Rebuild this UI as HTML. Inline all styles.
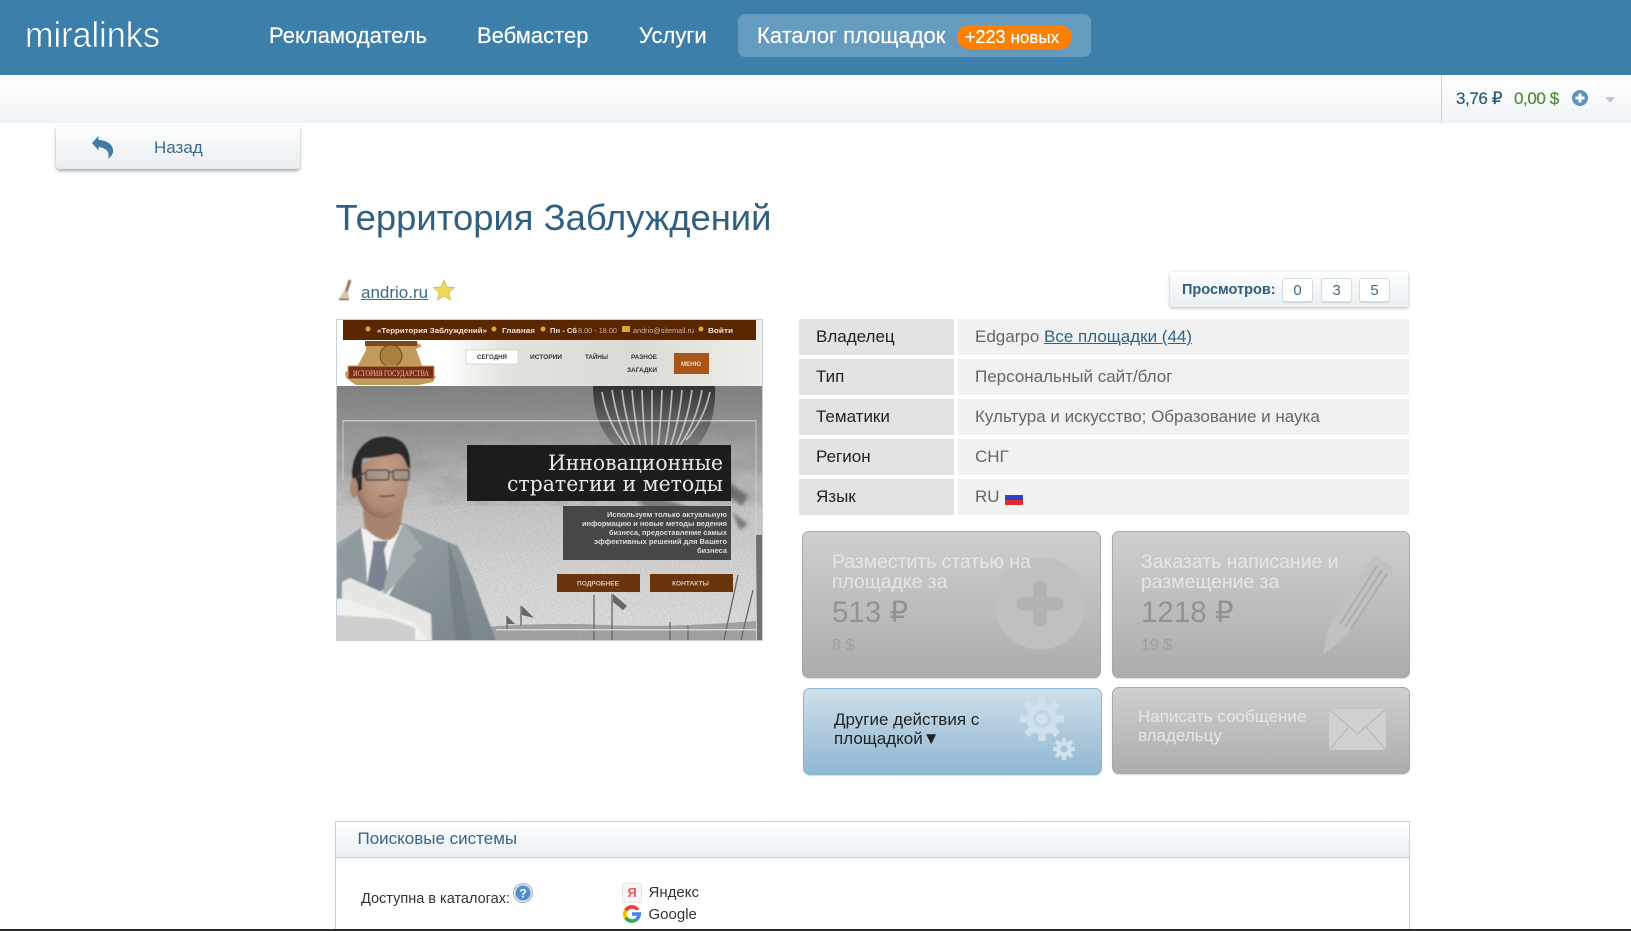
<!DOCTYPE html>
<html lang="ru"><head><meta charset="utf-8"><title>Территория Заблуждений</title>
<style>
html{margin:0;padding:0;background:#fff;width:1631px;height:931px;overflow:hidden}
body{margin:0;padding:0;background:#fff;width:1631px;height:931px;position:relative;overflow:hidden;font-family:"Liberation Sans","DejaVu Sans",sans-serif}
.a{position:absolute;white-space:nowrap}
.box{position:absolute;box-sizing:border-box}
.nav{color:#fff;font-size:22px;top:22px;line-height:28px;-webkit-text-stroke:.2px #fff}
.lab,.val{position:absolute;height:36px;line-height:36px;font-size:17px}
.lab{left:799px;width:155px;background:#e3e3e3;color:#222;padding-left:17px;box-sizing:border-box}
.val{left:958px;width:451px;background:#f1f1f1;color:#666;padding-left:17px;box-sizing:border-box}
.val a{color:#2f6488;text-decoration:underline}
.btn{position:absolute;box-sizing:border-box;border-radius:7px;border:1px solid #a9a9a9;background:linear-gradient(#cfcfcf,#acacac);box-shadow:0 1px 1px rgba(0,0,0,.15)}
.cnt{position:absolute;top:278px;height:24px;width:31px;box-sizing:border-box;border:1px solid #d6dbdf;border-radius:3px;background:#fff;color:#3d6a8a;text-align:center;font-size:15px;line-height:23px;box-shadow:0 1px 1px rgba(0,0,0,.12)}
</style></head><body>

<div class="box" style="left:0;top:0;width:1631px;height:75px;background:#3d7fab"></div>
<div class="a" style="left:25px;top:12px;font-size:36px;line-height:46px;color:#fff;-webkit-text-stroke:.6px #3d7fab;transform:scaleX(.95);transform-origin:0 0">miralinks</div>
<div class="a nav" style="left:269px">Рекламодатель</div>
<div class="a nav" style="left:477px">Вебмастер</div>
<div class="a nav" style="left:639px">Услуги</div>
<div class="box" style="left:738px;top:14px;width:353px;height:43px;background:#649bbe;border-radius:7px"></div>
<div class="a nav" style="left:757px">Каталог площадок</div>
<div class="box" style="left:957px;top:25px;width:115px;height:24px;background:#ff7f00;border-radius:12px"></div>
<div class="a" style="left:965px;top:23px;line-height:28px;font-size:18px;color:#fff;-webkit-text-stroke:.3px #fff">+223 <span style="font-size:17px">новых</span></div>

<div class="box" style="left:0;top:75px;width:1631px;height:48px;background:linear-gradient(#fff,#f0f3f6)"></div>
<div class="box" style="left:1441px;top:75px;width:1px;height:48px;background:#c9d2d8"></div>
<div class="a" style="left:1456px;top:88px;font-size:17px;line-height:22px;color:#2b5a7b;letter-spacing:-.4px;-webkit-text-stroke:.2px #2b5a7b">3,76 ₽</div>
<div class="a" style="left:1514px;top:88px;font-size:17px;line-height:22px;color:#4c8a35;letter-spacing:-.4px;-webkit-text-stroke:.2px #4c8a35">0,00 $</div>
<svg class="a" style="left:1572px;top:89px" width="16" height="18" viewBox="0 0 16 18"><circle cx="8" cy="9" r="8" fill="#5e93bc"/><path d="M8 4.500v9M3.500 9h9" stroke="#fff" stroke-width="3"/></svg>
<svg class="a" style="left:1604px;top:96px" width="12" height="8"><path d="M1 1h10L6 7z" fill="#c4c9cd"/></svg>

<div class="box" style="left:56px;top:126px;width:244px;height:43px;border-radius:0 0 4px 4px;background:linear-gradient(#fdfefe,#e9eef1);box-shadow:0 2px 3px rgba(0,0,0,.35)"></div>
<svg class="a" style="left:90px;top:134px;filter:blur(.3px)" width="26" height="27" viewBox="0 0 26 27"><path d="M2 9 8.500 2V6C17 6 24 11 23 18C22.500 21 20.500 23 18 25C20 20 18 14 8.500 13V16.500Z" fill="#427ba5"/></svg>
<div class="a" style="left:154px;top:137px;font-size:17px;line-height:22px;color:#3b6a8c">Назад</div>

<div class="a" style="left:335.500px;top:195px;font-size:36.400px;line-height:46px;color:#30607f">Территория Заблуждений</div>

<svg class="a" style="left:336px;top:278px;filter:blur(.4px)" width="20" height="24" viewBox="0 0 20 24"><path d="M14 2 10 14" stroke="#97785a" stroke-width="3" fill="none"/><path d="M8 13l4 1 1 7H3z" fill="#d8c6a8"/><path d="M3 21h10v1H3z" fill="#4b3a28"/></svg>
<div class="a" style="left:361px;top:282px;font-size:17px;line-height:22px;color:#3a6a8d;text-decoration:underline">andrio.ru</div>
<svg class="a" style="left:433px;top:279px" width="22" height="22" viewBox="0 0 22 22"><path d="M11 1l3 7 7.500.6-5.700 4.900 1.800 7.500L11 17l-6.600 4 1.800-7.500L.5 8.600 8 8z" fill="#eed95c" stroke="#cdb544" stroke-width=".7"/></svg>

<div class="box" style="left:1170px;top:272px;width:238px;height:35px;background:linear-gradient(#fdfefe,#eaeff2);border-radius:2px;box-shadow:0 1px 3px rgba(0,0,0,.3)"></div>
<div class="a" style="left:1182px;top:279px;font-size:14.500px;font-weight:bold;line-height:22px;color:#2f5c7c">Просмотров:</div>
<div class="cnt" style="left:1282px">0</div><div class="cnt" style="left:1321px">3</div><div class="cnt" style="left:1359px">5</div>

<svg class="a" style="left:336px;top:320px" width="427" height="321" viewBox="0 0 427 321">
<defs>
<linearGradient id="bg" x1="0" y1="0" x2="0" y2="1"><stop offset="0" stop-color="#808080"/><stop offset=".2" stop-color="#9c9c9c"/><stop offset=".42" stop-color="#c4c4c4"/><stop offset=".75" stop-color="#d8d8d8"/><stop offset="1" stop-color="#e0e0e0"/></linearGradient>
<linearGradient id="top" x1="0" y1="0" x2="1" y2="0"><stop offset="0" stop-color="#fff"/><stop offset=".25" stop-color="#fff"/><stop offset=".4" stop-color="#e4e2dc"/><stop offset=".7" stop-color="#dcdad4"/><stop offset="1" stop-color="#efeeea"/></linearGradient>
<linearGradient id="suit" x1="0" y1="0" x2="1" y2="1"><stop offset="0" stop-color="#9ca5a8"/><stop offset="1" stop-color="#78848a"/></linearGradient>
<linearGradient id="loon" x1="0" y1="0" x2="0" y2="1"><stop offset="0" stop-color="#333"/><stop offset=".45" stop-color="#5f5f5f"/><stop offset="1" stop-color="#8f8f8f"/></linearGradient>
<radialGradient id="face" cx=".55" cy=".4" r=".7"><stop offset="0" stop-color="#c9a48c"/><stop offset=".7" stop-color="#ad8771"/><stop offset="1" stop-color="#7d5a4a"/></radialGradient>
<filter id="cl" x="0" y="0" width="100%" height="100%"><feTurbulence type="fractalNoise" baseFrequency=".03 .05" numOctaves="4" seed="7"/><feColorMatrix values="0 0 0 0 .25 0 0 0 0 .25 0 0 0 0 .25 1.600 0 0 0 -.5"/></filter>
<filter id="st" x="0" y="0" width="100%" height="100%"><feTurbulence type="fractalNoise" baseFrequency=".5 .9" numOctaves="2" seed="3"/><feColorMatrix values="0 0 0 0 .15 0 0 0 0 .15 0 0 0 0 .15 1.600 0 0 0 -.55"/></filter>
<filter id="b1"><feGaussianBlur stdDeviation=".7"/></filter>
<filter id="b2"><feGaussianBlur stdDeviation=".35"/></filter>
<filter id="b3"><feGaussianBlur stdDeviation="1.500"/></filter>
</defs>
<rect width="427" height="321" fill="#fff"/>
<rect y="0" width="427" height="66" fill="url(#top)"/>
<rect y="66" width="427" height="255" fill="url(#bg)"/>
<rect y="66" width="427" height="120" filter="url(#cl)" opacity=".5"/>
<rect y="66" width="427" height="255" filter="url(#st)" opacity=".25"/>
<path d="M257 66h122q2 40-20 62l-22 14h-38q-28-16-38-46-4-14-4-30z" fill="url(#loon)"/>
<g stroke="#cfcfcf" stroke-width="1.700" fill="none" opacity=".85" filter="url(#b2)"><path d="M266 72q6 34 26 56M276 70q6 38 22 64M286 70q4 36 18 68M296 70q3 38 12 70M306 70q1 38 6 70M316 70v70M326 70q-1 38-6 70M336 70q-2 38-10 70M346 70q-3 36-16 68M356 70q-5 36-20 64M366 70q-6 34-24 58M374 72q-6 28-24 48"/></g>
<path d="M300 181q30-6 55 8l25 18-10 6-26-14-30-8z" fill="#3a3a3a" opacity=".5" filter="url(#b3)"/>
<path d="M392 162l20 14-6 10-14-10zM396 192l16 12-8 6z" fill="#3a3a3a" opacity=".55" filter="url(#b3)"/>
<rect x="7" y="100" width="413" height="1.500" fill="#dcdcdc" opacity=".7"/>
<path d="M7 100v60M420 100v120" stroke="#dcdcdc" stroke-width="1.200" opacity=".6"/>

<g filter="url(#b2)">
<rect x="7" y="0" width="413" height="20" fill="#5a2605"/>
<g font-family="Liberation Sans,sans-serif" font-size="7" font-weight="bold" fill="#f1e6d8" lengthAdjust="spacingAndGlyphs">
<text x="41" y="13" textLength="110" lengthAdjust="spacingAndGlyphs">«Территория Заблуждений»</text><text x="166" y="13" textLength="33" lengthAdjust="spacingAndGlyphs">Главная</text><text x="214" y="13" textLength="27" lengthAdjust="spacingAndGlyphs">Пн - Сб</text><text x="242" y="13" font-weight="normal" fill="#c9b7a4" textLength="39" lengthAdjust="spacingAndGlyphs">8.00 - 18.00</text><text x="297" y="13" font-weight="normal" fill="#c9b7a4" textLength="61" lengthAdjust="spacingAndGlyphs">andrio@sitemail.ru</text><text x="372" y="13" textLength="25" lengthAdjust="spacingAndGlyphs">Войти</text></g>
<g fill="#d9a92e"><circle cx="32" cy="9" r="2.500"/><circle cx="158" cy="9" r="2.500"/><circle cx="207" cy="9" r="2.500"/><rect x="286" y="6" width="8" height="6"/><circle cx="365" cy="9" r="2.500"/></g>

<path d="M30 22h50l6 4-6 3 8 22 12 5-3 6-14 3H20l-10-7-1-6 11-3 10-19z" fill="#c39a5b"/>
<path d="M29 21h52v5H29z" fill="#7c4a1c"/><circle cx="55" cy="36" r="11" fill="#a97f3e" stroke="#6e4a1f"/>
<rect x="12" y="46" width="86" height="13" fill="#7a2e17" stroke="#d0a85f"/>
<text x="17" y="56" font-family="Liberation Serif,serif" font-size="8" fill="#e8c99b" textLength="76" lengthAdjust="spacingAndGlyphs">ИСТОРИЯ ГОСУДАРСТВА</text>

<rect x="130" y="30" width="52" height="14" fill="#fff" stroke="#cfcfcf" stroke-width=".8"/>
<g font-family="Liberation Sans,sans-serif" font-size="6.500" font-weight="bold" fill="#333"><text x="141" y="39" textLength="30" lengthAdjust="spacingAndGlyphs">СЕГОДНЯ</text><text x="194" y="39" textLength="32" lengthAdjust="spacingAndGlyphs">ИСТОРИИ</text><text x="249" y="39" textLength="23" lengthAdjust="spacingAndGlyphs">ТАЙНЫ</text><text x="295" y="39" textLength="26" lengthAdjust="spacingAndGlyphs">РАЗНОЕ</text><text x="291" y="52" textLength="30" lengthAdjust="spacingAndGlyphs">ЗАГАДКИ</text></g>
<rect x="338" y="33" width="35" height="21" fill="#a8551a"/><text x="345" y="46" font-family="Liberation Sans,sans-serif" font-size="6.500" font-weight="bold" fill="#f0dcc8" textLength="20" lengthAdjust="spacingAndGlyphs">МЕНЮ</text>

<rect x="131" y="125" width="264" height="56" fill="#1c1c1c"/>
<g font-family="DejaVu Serif,serif" font-size="21" fill="#e8e8e8"><text x="212" y="150" textLength="175" lengthAdjust="spacingAndGlyphs">Инновационные</text><text x="171" y="171" textLength="216" lengthAdjust="spacingAndGlyphs">стратегии и методы</text></g>
<rect x="227" y="186" width="168" height="54" fill="#464646"/>
<g font-family="Liberation Sans,sans-serif" font-size="7" font-weight="bold" fill="#dcdcdc"><text x="271" y="197" textLength="120" lengthAdjust="spacingAndGlyphs">Используем только актуальную</text><text x="246" y="206" textLength="145" lengthAdjust="spacingAndGlyphs">информацию и новые методы ведения</text><text x="273" y="215" textLength="118" lengthAdjust="spacingAndGlyphs">бизнеса, предоставление самых</text><text x="258" y="224" textLength="133" lengthAdjust="spacingAndGlyphs">эффективных решений для Вашего</text><text x="361" y="233" textLength="30" lengthAdjust="spacingAndGlyphs">бизнеса</text></g>
<rect x="221" y="254" width="83" height="18" fill="#6b3410"/><rect x="314" y="254" width="83" height="18" fill="#6b3410"/>
<g font-family="Liberation Sans,sans-serif" font-size="6.500" font-weight="bold" fill="#dcc6b2"><text x="241" y="265.500" textLength="42" lengthAdjust="spacingAndGlyphs">ПОДРОБНЕЕ</text><text x="336" y="265.500" textLength="37" lengthAdjust="spacingAndGlyphs">КОНТАКТЫ</text></g>

<g stroke="#666" fill="none" stroke-width="1.300"><path d="M258 320v-45M276 320v-46M185 306v-20M171 310v-14M334 320v-18M352 320v-14M388 320l14-65M405 320l12-50"/></g>
<path d="M277 274l14 12-4 4-10-8zM186 286l12 12-12-3zM171 296l8 8-8 0z" fill="#666"/>
<path d="M150 307q60-5 120-2t150-4v20H160z" fill="#6a6a6a" opacity=".5"/>
<rect x="160" y="309" width="265" height="1.500" fill="#e4e4e4" opacity=".8"/>
<path d="M420 215l1 105h6V215z" fill="#4a4a4a" opacity=".7"/>
</g>

<g filter="url(#b1)">
<path d="M0 224l25-16 42-5 55 23 14 30 24 65H0z" fill="url(#suit)"/>
<path d="M112 222q12 30 14 50l10 49h-16l-6-50z" fill="#6c787d" opacity=".6"/>
<path d="M25 208 30 240 31 262 50 280 66 252 68 204 46 214z" fill="#f1f1f1"/>
<path d="M37 221h15l-4 9 5 33-11 12-11-10 6-36z" fill="#7b8494"/>
<path d="M67 203l20 25-10 6 3 6-35 40 11-50z" fill="#a3acaf"/>
<path d="M25 207l-24 25 7 24 17 9 1-30z" fill="#8e999d"/>
<path d="M27 178q0 20 2 30 14 14 24 12 10-4 12-18l4-30z" fill="#a88470"/>
<path d="M22 146l-1 28q3 12 10 18 12 10 24 4 12-10 16-22l2-28q-4-16-14-18z" fill="url(#face)"/>
<path d="M17 172l-1-20q2-24 20-33 18-6 30 3 9 8 8 28l-3-4q-4-14-12-12-18 4-32 4-2 4-1 14 0 12 0 18z" fill="#2c2a29"/>
<ellipse cx="18" cy="168" rx="4" ry="10" fill="#ad8771"/>
<g fill="#98918c" fill-opacity=".55" stroke="#4a4a4a" stroke-width="1.500"><rect x="30" y="150" width="23" height="10" rx="2"/><rect x="57" y="150" width="16" height="10" rx="2"/></g>
<path d="M53 152h4M30 152l-9 6" stroke="#4a4a4a" stroke-width="1.500"/>
<path d="M43 176q8 1 16-1" stroke="#7c4f40" stroke-width="1.800" fill="none"/>
<path d="M0 279l14-1 80 30 2 13H0z" fill="#f0f0ed"/>
<path d="M6 262l8-4 81 36 1 27-5-2-13-17L6 278z" fill="#e6e6e3"/>
<path d="M0 295l55 4 24 9 0 13H0z" fill="#cfcfcd"/>
</g>
</svg>
<div class="box" style="left:336px;top:319px;width:427px;height:322px;border:1px solid #c5d0d8;pointer-events:none"></div>

<div class="lab" style="top:319px">Владелец</div><div class="val" style="top:319px">Edgarpo <a>Все площадки (44)</a></div>
<div class="lab" style="top:359px">Тип</div><div class="val" style="top:359px">Персональный сайт/блог</div>
<div class="lab" style="top:399px">Тематики</div><div class="val" style="top:399px">Культура и искусство; Образование и наука</div>
<div class="lab" style="top:439px">Регион</div><div class="val" style="top:439px">СНГ</div>
<div class="lab" style="top:479px">Язык</div><div class="val" style="top:479px">RU</div>
<svg class="a" style="left:1005px;top:490px" width="18" height="15"><rect width="18" height="15" rx="2" fill="#f4f4f4"/><rect y="5" width="18" height="5" fill="#2b43c8"/><rect y="10" width="18" height="5" rx="1" fill="#e02a2a"/></svg>

<div class="btn" style="left:802px;top:531px;width:299px;height:147px"></div>
<svg class="a" style="left:994px;top:557px" width="92" height="93" viewBox="0 0 92 93"><circle cx="46" cy="46.500" r="46" fill="#c0c0c0"/><path d="M46 30v33M29.500 46.500h33" stroke="#b2b2b2" stroke-width="14" stroke-linecap="round"/></svg>
<div class="a" style="left:832px;top:553px;font-size:19.400px;line-height:19.500px;color:#e6e6e6">Разместить статью на<br>площадке за</div>
<div class="a" style="left:832px;top:595px;font-size:29.500px;line-height:36px;color:#929292">513 ₽</div>
<div class="a" style="left:832px;top:636px;font-size:16px;line-height:20px;color:#9f9f9f">8 $</div>

<div class="btn" style="left:1112px;top:531px;width:298px;height:147px"></div>
<svg class="a" style="left:1318px;top:552px" width="80" height="108" viewBox="0 0 80 108"><path d="M5 103 9 78 52 8Q55 4 60 6L72 13Q76 16 74 20L29 83Z" fill="#c1c1c1"/><path d="M22 72 59 14M27 75 64 18M32 78 69 22" stroke="#ababab" stroke-width="1.800"/></svg>
<div class="a" style="left:1141px;top:553px;font-size:19.400px;line-height:19.500px;color:#e6e6e6">Заказать написание и<br>размещение за</div>
<div class="a" style="left:1141px;top:595px;font-size:29.500px;line-height:36px;color:#929292">1218 ₽</div>
<div class="a" style="left:1141px;top:636px;font-size:16px;line-height:20px;color:#9f9f9f">19 $</div>

<div class="btn" style="left:803px;top:688px;width:299px;height:87px;border-color:#8fb6d1;background:linear-gradient(#cfe0ea,#8fb6d1)"></div>
<svg class="a" style="left:1018px;top:696px" width="62" height="68" viewBox="0 0 62 68"><g fill="#d0e1eb"><circle cx="24" cy="23" r="15.500"/><g stroke="#d0e1eb" stroke-width="7"><path d="M24 1v44M2 23h44M8.500 7.500l31 31M39.500 7.500l-31 31"/></g></g><circle cx="24" cy="23" r="9" fill="#c1d6e3"/><circle cx="24" cy="23" r="5.500" fill="#d0e1eb"/><g fill="#cfe0ea"><circle cx="46" cy="53" r="8"/><g stroke="#cfe0ea" stroke-width="4"><path d="M46 42v22M35 53h22M38 45l16 16M54 45l-16 16"/></g></g><circle cx="46" cy="53" r="3.500" fill="#a7c6da"/></svg>
<div class="a" style="left:834px;top:710px;font-size:17px;line-height:19px;color:#222">Другие действия с<br>площадкой▼</div>

<div class="btn" style="left:1112px;top:687px;width:298px;height:87px"></div>
<svg class="a" style="left:1329px;top:709px" width="57" height="41" viewBox="0 0 57 41"><rect width="57" height="41" fill="#d0d0d0"/><path d="M0 0l28.500 25L57 0M0 41l20-23M57 41 37 18" fill="none" stroke="#b8b8b8" stroke-width="1.200"/></svg>
<div class="a" style="left:1138px;top:706.500px;font-size:17px;line-height:19px;color:#e6e6e6">Написать сообщение<br>владельцу</div>

<div class="box" style="left:335px;top:821px;width:1075px;height:120px;border:1px solid #c5d2da"></div>
<div class="box" style="left:336px;top:822px;width:1073px;height:36px;background:linear-gradient(#fff,#eaeff2);border-bottom:1px solid #c5d2da"></div>
<div class="a" style="left:357.500px;top:828px;font-size:17px;line-height:22px;color:#36658a">Поисковые системы</div>
<div class="a" style="left:361px;top:888px;font-size:14.500px;line-height:22px;color:#333">Доступна в каталогах:</div>
<svg class="a" style="left:513px;top:883px" width="20" height="20" viewBox="0 0 20 20"><circle cx="10" cy="10" r="9.500" fill="#dfe6eb" stroke="#a9b6bf"/><circle cx="10" cy="10" r="7.500" fill="#4e8fd0"/><text x="10" y="14.500" text-anchor="middle" font-family="Liberation Sans,sans-serif" font-size="12" font-weight="bold" fill="#fff">?</text></svg>
<div class="box" style="left:622px;top:883px;width:20px;height:20px;background:#f7f7f7;border:1px solid #e2e2e2;border-radius:2px;color:#e8605c;font:bold 13px/18px 'Liberation Sans',sans-serif;text-align:center">Я</div>
<div class="a" style="left:648.500px;top:882px;font-size:15px;line-height:22px;color:#333">Яндекс</div>
<svg class="a" style="left:622px;top:904px" width="20" height="20" viewBox="0 0 20 20"><path d="M17.500 5.200A9 9 0 0 0 2.300 5.200L5.300 7.600A5.500 5.500 0 0 1 14 6.400z" fill="#ea4335"/><path d="M2.300 5.200a9 9 0 0 0 0 9.600l3-2.400a5.500 5.500 0 0 1 0-4.800z" fill="#fbbc05"/><path d="M2.300 14.800a9 9 0 0 0 13.500 1.900l-2.900-2.300a5.500 5.500 0 0 1-7.600-2z" fill="#34a853"/><path d="M19 8.300h-9v3.500h5.300a5 5 0 0 1-2.400 2.600l2.900 2.300C18 14.800 19.400 11.800 19 8.300z" fill="#4285f4"/></svg>
<div class="a" style="left:648.500px;top:904px;font-size:15px;line-height:22px;color:#333">Google</div>

<div class="box" style="left:0;top:929px;width:1631px;height:2px;background:#2a2a2a"></div>
</body></html>
